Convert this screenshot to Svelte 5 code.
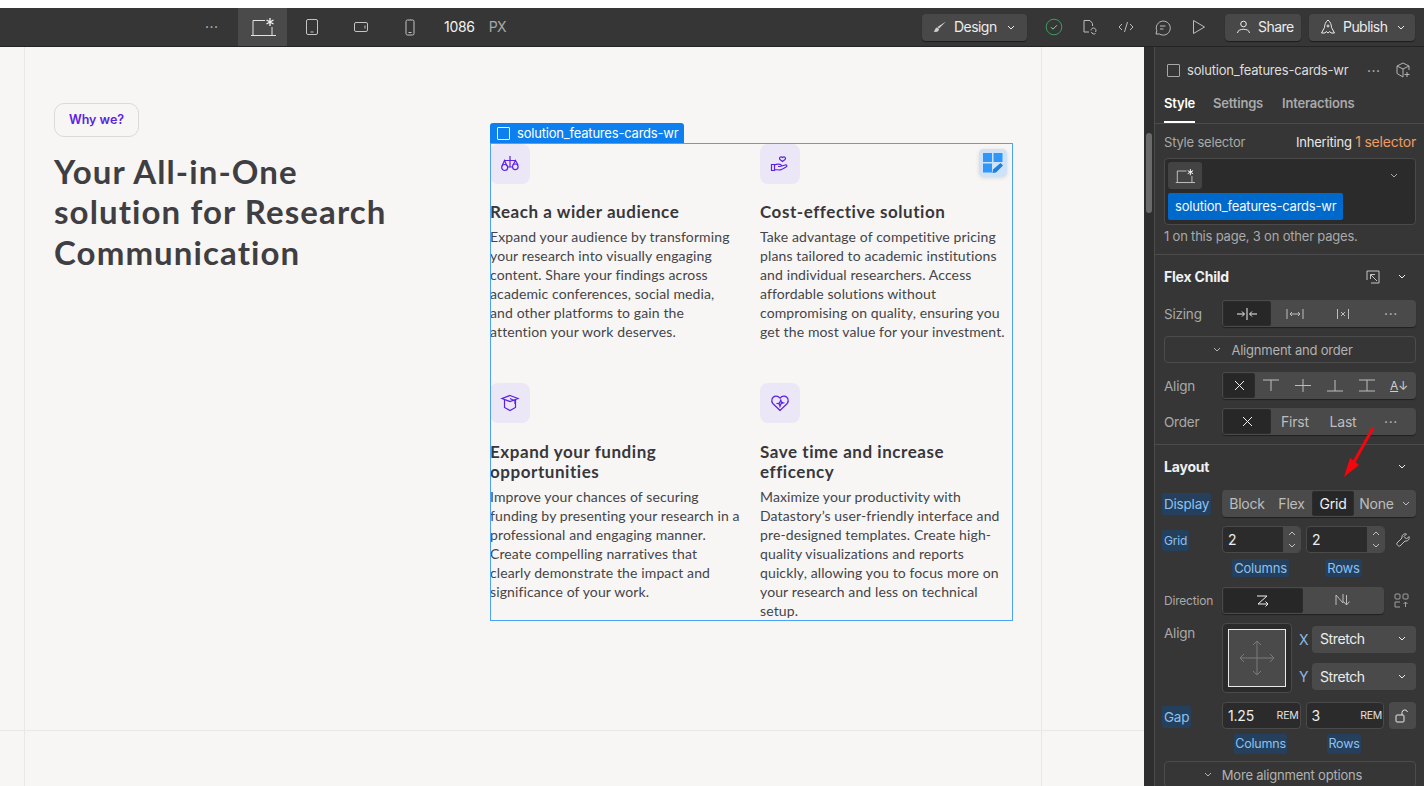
<script>
  const features = [
    {
      title: ['Reach a wider audience'],
      icon: 'scale',
      body: ['Expand your audience by transforming', 'your research into visually engaging', 'content. Share your findings across', 'academic conferences, social media,', 'and other platforms to gain the', 'attention your work deserves.']
    },
    {
      title: ['Cost-effective solution'],
      icon: 'hand',
      body: ['Take advantage of competitive pricing', 'plans tailored to academic institutions', 'and individual researchers. Access', 'affordable solutions without', 'compromising on quality, ensuring you', 'get the most value for your investment.']
    },
    {
      title: ['Expand your funding', 'opportunities'],
      icon: 'cap',
      body: ['Improve your chances of securing', 'funding by presenting your research in a', 'professional and engaging manner.', 'Create compelling narratives that', 'clearly demonstrate the impact and', 'significance of your work.']
    },
    {
      title: ['Save time and increase', 'efficency'],
      icon: 'heart',
      body: ['Maximize your productivity with', 'Datastory’s user-friendly interface and', 'pre-designed templates. Create high-', 'quality visualizations and reports', 'quickly, allowing you to focus more on', 'your research and less on technical', 'setup.']
    }
  ];
</script>

<div class="app">
  <header class="topbar">
    <span class="dots top-dots">···</span>
    <div class="tab active">
      <svg class="laptop" width="26" height="20" viewBox="0 0 26 20"><path d="M3 18V3.500h12M1 18.500h25M22 10v8" /><path class="star" d="M20 1v8M16.500 3l7 4M23.500 3l-7 4" /></svg>
    </div>
    <div class="tab"><svg width="14" height="18" viewBox="0 0 14 18"><rect x="1.500" y="1.500" width="11" height="15" rx="1.500" /><path d="M5.500 14h3" /></svg></div>
    <div class="tab"><svg width="16" height="12" viewBox="0 0 16 12"><rect x="1.500" y="1.500" width="13" height="9" rx="1.500" /><path d="M12 4.500v3" /></svg></div>
    <div class="tab"><svg width="10" height="17" viewBox="0 0 10 17"><rect x="1" y="1" width="8" height="15" rx="1.500" /><path d="M3.500 13.500h3" /></svg></div>
    <span class="width-val">1086</span>
    <span class="width-unit">PX</span>

    <div class="top-right">
      <button class="top-btn design">
        <svg width="14" height="14" viewBox="0 0 14 14"><path class="solid" d="M13 1.500L6 8.500l-1.500-1.500zM4 7.500c-2 0-1.500 3-3.500 4 2.500 1 5.500.5 5.500-2.500z" /></svg>
        <span>Design</span>
        <svg class="chev" width="8" height="5" viewBox="0 0 8 5"><path d="M1 1l3 3 3-3" /></svg>
      </button>
      <svg class="status" width="18" height="18" viewBox="0 0 18 18"><circle cx="9" cy="9" r="7.800" /><path d="M6 9.200l2 2 4-4" /></svg>
      <svg class="tool first-tool" width="16" height="16" viewBox="0 0 16 16"><path d="M7 13H2V1.500h6l2.500 3V7" /><path d="M9 11.500a2.500 2.500 0 1 1 4.500 1.500M13.500 14.500a2.500 2.500 0 0 1-4-1.500" /></svg>
      <svg class="tool code-tool" width="16" height="12" viewBox="0 0 16 12"><path d="M4 3L1 6l3 3M12 3l3 3-3 3M9.500 1l-3 10" /></svg>
      <svg class="tool chat-tool" width="17" height="17" viewBox="0 0 17 17"><path d="M2 15l.8-3.200A7 7 0 1 1 5.500 15z" /><path d="M6 7h5.500M6 10h3.500" /></svg>
      <svg class="tool play-tool" width="14" height="16" viewBox="0 0 14 16"><path d="M1.500 1.500v13l11-6.500z" /></svg>
      <button class="top-btn share">
        <svg width="15" height="14" viewBox="0 0 15 14"><circle cx="7.500" cy="4" r="2.800" /><path d="M1.500 13c0-5 12-5 12 0" /></svg>
        <span>Share</span>
      </button>
      <button class="top-btn publish">
        <svg width="16" height="16" viewBox="0 0 16 16"><path d="M8 1C5.500 3 4.500 6 4.500 8.500L1.500 14H5l1.200-1.500L8 14l1.800-1.500L11 14h3.500l-3-5.500C11.500 6 10.500 3 8 1z" /><circle cx="8" cy="7" r="1" /></svg>
        <span>Publish</span>
        <svg class="chev" width="8" height="5" viewBox="0 0 8 5"><path d="M1 1l3 3 3-3" /></svg>
      </button>
    </div>
  </header>

  <div class="workspace">
    <main class="canvas">
      <i class="guide v-left"></i>
      <i class="guide v-right"></i>
      <i class="guide h-bottom"></i>

      <section class="intro">
        <span class="badge">Why we?</span>
        <h1>Your All-in-One<br />solution for Research<br />Communication</h1>
      </section>

      <section class="cards">
        <div class="sel-label">
          <span class="sel-box"></span>
          solution_features-cards-wr
        </div>
        <div class="edit-grid">
          <svg width="20" height="20" viewBox="0 0 20 20">
            <rect x="0" y="0" width="9" height="9" /><rect x="10.500" y="0" width="9" height="9" /><rect x="0" y="10.500" width="9" height="9" />
            <path class="pencil" d="M17.500 10l2.500 2.500-7 7-3.500.5.500-3.500z" />
          </svg>
        </div>
        {#each features as f}
          <article class="card">
            <div class="card-icon">
              <svg width="20" height="20" viewBox="0 0 20 20">
                {#if f.icon === 'scale'}
                  <path d="M10 2v11M4 6.500h12M7 13h6" />
                  <path d="M2 12l2.500-5.500L7 12M13 11l2.500-4.500L18 11" />
                  <circle cx="4.700" cy="13.500" r="3" /><circle cx="15.300" cy="12.800" r="2.800" />
                {:else if f.icon === 'hand'}
                  <path d="M12.500 7.500L10 5.500c-1.500-1.500.5-3.500 2.500-2 2-1.500 4 .5 2.500 2z" />
                  <path d="M1.500 10.500h3v6h-3zM4.500 11c3-1.500 4-1 6-.5 1.500.5 1 2-.5 2H8M10 12.500l5-1.500c2-.5 2.500 1 1 2-3 2-5 3-7 3l-4.500-.5" />
                {:else if f.icon === 'cap'}
                  <path d="M10 2.500l8 3-8 3-8-3zM4.500 7v7.500L10 17.500l5.500-3V7" />
                  <path d="M10 5.500l5 2.500v3" />
                {:else}
                  <path d="M10 17.500L3 10.800C.5 8 2 3.500 5.800 3.200 7.800 3 9 4 10 5.200 11 4 12.200 3 14.200 3.200 18 3.500 19.500 8 17 10.800z" />
                  <path d="M10.800 7l-1.300 3-2 .5 2 .8.500 2 1.300-3 2-.5-2-.8z" />
                {/if}
              </svg>
            </div>
            <h3>{#each f.title as line}<span>{line}</span>{/each}</h3>
            <p>{#each f.body as line}<span>{line}</span>{/each}</p>
          </article>
        {/each}
      </section>
    </main>

    <div class="scroll-track"><div class="scroll-thumb"></div></div>

    <aside class="panel">
      <div class="el-head">
        <span class="el-box"></span>
        <span class="el-name">solution_features-cards-wr</span>
        <span class="dots el-dots">···</span>
        <svg class="cube" width="16" height="16" viewBox="0 0 16 16"><path d="M8 1l6 3v4M8 1L2 4v7.500L8 15M2 4l6 3 6-3M8 7v8" /><path d="M12 10v5M9.500 12.500h5" /></svg>
      </div>
      <nav class="tabs">
        <span class="on">Style</span><span>Settings</span><span>Interactions</span>
      </nav>

      <div class="section selector-sec">
        <div class="sel-title"><span>Style selector</span><span class="inherit">Inheriting <em>1 selector</em></span></div>
        <div class="sel-field">
          <div class="sel-top">
            <span class="chip"><svg class="laptop" width="20" height="16" viewBox="0 0 26 20"><path d="M3 18V3.500h12M1 18.500h25M22 10v8" /><path class="star" d="M20 1v8M16.500 3l7 4M23.500 3l-7 4" /></svg></span>
            <svg class="chev" width="8" height="5" viewBox="0 0 8 5"><path d="M1 1l3 3 3-3" /></svg>
          </div>
          <span class="tag">solution_features-cards-wr</span>
        </div>
        <div class="sel-note">1 on this page, 3 on other pages.</div>
      </div>

      <div class="section flex-sec">
        <div class="sec-head">
          <b>Flex Child</b>
          <svg class="corner" width="14" height="14" viewBox="0 0 14 14"><path d="M1 10V1h12v12H5" /><path d="M11 11L4.500 4.500M4.500 9V4.500H9" /></svg>
          <svg class="chev" width="8" height="5" viewBox="0 0 8 5"><path d="M1 1l3 3 3-3" /></svg>
        </div>
        <div class="row">
          <label>Sizing</label>
          <div class="seg four">
            <span class="on"><svg width="22" height="14" viewBox="0 0 22 14"><path d="M11 1v12M1 7h7M6 4.500L8.500 7 6 9.500M21 7h-7M16 4.500L13.500 7l2.500 2.500" /></svg></span>
            <span><svg width="18" height="12" viewBox="0 0 18 12"><path d="M1 1v10M17 1v10M4 6h10M6 4L4 6l2 2M12 4l2 2-2 2" /></svg></span>
            <span><svg width="14" height="12" viewBox="0 0 14 12"><path d="M1.500 1v10M12.500 1v10M5 4l4 4M9 4L5 8" /></svg></span>
            <span class="txt-dots">···</span>
          </div>
        </div>
        <div class="wide-btn"><svg class="chev" width="8" height="5" viewBox="0 0 8 5"><path d="M1 1l3 3 3-3" /></svg>Alignment and order</div>
        <div class="row">
          <label>Align</label>
          <div class="seg six">
            <span class="on"><svg width="11" height="11" viewBox="0 0 11 11"><path d="M1 1l9 9M10 1l-9 9" /></svg></span>
            <span><svg width="16" height="13" viewBox="0 0 16 13"><path d="M0 1h16M8 1v11" /></svg></span>
            <span><svg width="16" height="13" viewBox="0 0 16 13"><path d="M0 6.500h16M8 0v13" /></svg></span>
            <span><svg width="16" height="13" viewBox="0 0 16 13"><path d="M0 12h16M8 1v11" /></svg></span>
            <span><svg width="16" height="13" viewBox="0 0 16 13"><path d="M0 1h16M0 12h16M8 1v11" /></svg></span>
            <span class="az"><u>A</u>↓</span>
          </div>
        </div>
        <div class="row">
          <label>Order</label>
          <div class="seg four">
            <span class="on"><svg width="11" height="11" viewBox="0 0 11 11"><path d="M1 1l9 9M10 1l-9 9" /></svg></span>
            <span>First</span><span>Last</span><span class="txt-dots">···</span>
          </div>
        </div>
      </div>

      <div class="section layout-sec">
        <div class="sec-head">
          <b>Layout</b>
          <svg class="chev" width="8" height="5" viewBox="0 0 8 5"><path d="M1 1l3 3 3-3" /></svg>
        </div>
        <div class="row">
          <label><mark>Display</mark></label>
          <div class="seg display">
            <span>Block</span><span>Flex</span><span class="on">Grid</span>
            <span class="none">None <svg class="chev" width="8" height="5" viewBox="0 0 8 5"><path d="M1 1l3 3 3-3" /></svg></span>
          </div>
        </div>
        <div class="row">
          <label class="small low"><mark>Grid</mark></label>
          <div class="stepper">2<div class="arrows"><svg width="8" height="5" viewBox="0 0 8 5"><path d="M1 4l3-3 3 3" /></svg><svg width="8" height="5" viewBox="0 0 8 5"><path d="M1 1l3 3 3-3" /></svg></div></div>
          <div class="stepper">2<div class="arrows"><svg width="8" height="5" viewBox="0 0 8 5"><path d="M1 4l3-3 3 3" /></svg><svg width="8" height="5" viewBox="0 0 8 5"><path d="M1 1l3 3 3-3" /></svg></div></div>
          <svg class="wrench" width="14" height="14" viewBox="0 0 14 14"><path d="M13 3.500L10.500 6 8 3.500 10.500 1C8 .2 5.500 2 6 5L1 10c-1 1 1.500 4 3 3l5-5c3 .5 4.800-2 4-4.500z" /></svg>
        </div>
        <div class="captions"><mark>Columns</mark><mark>Rows</mark></div>
        <div class="row dir-row">
          <label class="small">Direction</label>
          <div class="seg direction">
            <span class="on"><svg width="14" height="15" viewBox="0 0 14 15"><path d="M1 1h10L2 9h10M9.500 6.500L12 9l-2.500 2.500" transform="translate(0 2)" /></svg></span>
            <span><svg width="16" height="15" viewBox="0 0 16 15"><path d="M1 12V2l7 8V1M8.500 8.500l3 3.500 3-3.500M11.500 2v10" /></svg></span>
          </div>
          <svg class="dir-extra" width="15" height="15" viewBox="0 0 15 15"><rect x="1" y="1" width="5" height="5" rx="1" /><rect x="9" y="1" width="5" height="5" rx="1" /><path d="M6 9H1v5h5M11.500 14V9M9.500 11l2-2 2 2" /></svg>
        </div>
        <div class="row align-row">
          <label>Align</label>
          <div class="align-box">
            <div class="align-inner">
              <svg width="36" height="36" viewBox="0 0 36 36"><path d="M18 1v34M1 18h34M14 5l4-4 4 4M14 31l4 4 4-4M5 14l-4 4 4 4M31 14l4 4-4 4" /></svg>
            </div>
          </div>
          <div class="xy">
            <div><span class="axis">X</span><div class="select">Stretch<svg class="chev" width="8" height="5" viewBox="0 0 8 5"><path d="M1 1l3 3 3-3" /></svg></div></div>
            <div><span class="axis">Y</span><div class="select">Stretch<svg class="chev" width="8" height="5" viewBox="0 0 8 5"><path d="M1 1l3 3 3-3" /></svg></div></div>
          </div>
        </div>
        <div class="row gap-row">
          <label class="low"><mark>Gap</mark></label>
          <div class="stepper unit"><span>1.25</span><small>REM</small></div>
          <div class="stepper unit"><span>3</span><small>REM</small></div>
          <div class="lock"><svg width="15" height="14" viewBox="0 0 15 14"><rect x="1" y="6" width="8" height="7" rx="1" /><path d="M7 6V3.500a2.800 2.800 0 0 1 5.500-.5" /></svg></div>
        </div>
        <div class="captions gap-cap"><mark>Columns</mark><mark>Rows</mark></div>
        <div class="wide-btn more"><svg class="chev" width="8" height="5" viewBox="0 0 8 5"><path d="M1 1l3 3 3-3" /></svg>More alignment options</div>
      </div>
    </aside>
  </div>

  <!-- red annotation drawn over the screenshot -->
  <svg class="red-arrow" width="40" height="60" viewBox="0 0 40 60"><path d="M33 4L14 38" /><path class="head" d="M4 53l6-19 9 7z" /></svg>
</div>

<style>
  :global(body) {
    margin: 0;
    background: #fff;
    overflow: hidden;
  }

  svg {
    fill: none;
    stroke: currentColor;
    stroke-width: 1;
    flex-shrink: 0;
  }

  .app {
    position: relative;
    height: 786px;
    padding-top: 8px;
    box-sizing: border-box;
    display: flex;
    flex-direction: column;
    overflow: hidden;
    font-family: Inter, "Liberation Sans", sans-serif;
    font-size: 13px;
    color: #d8d8d8;
  }

  /* top bar */
  .topbar {
    height: 39px;
    flex-shrink: 0;
    display: flex;
    align-items: stretch;
    background: #363636;
    border-bottom: 1px solid #242424;
    box-sizing: border-box;
    padding-left: 205px;
  }

  .dots {
    letter-spacing: 0.5px;
    color: #bdbdbd;
    font-size: 14px;
  }

  .top-dots {
    width: 33px;
    line-height: 37px;
  }

  .tab {
    width: 49px;
    display: flex;
    align-items: center;
    justify-content: center;
    color: #c4c4c4;
  }

  .tab.active {
    background: #4a4a4a;
    color: #e4e4e4;
  }

  .laptop .star {
    stroke-width: 1.300;
    color: #f4f4f4;
  }

  .width-val {
    margin-left: 10px;
    line-height: 37px;
    font-size: 14px;
    letter-spacing: -0.3px;
    color: #f2f2f2;
  }

  .width-unit {
    margin-left: 14px;
    line-height: 37px;
    font-size: 14px;
    letter-spacing: -0.6px;
    color: #a8a8a8;
  }

  .top-right {
    margin-left: auto;
    display: flex;
    align-items: center;
    padding-right: 9px;
  }

  .top-btn {
    height: 27px;
    display: flex;
    align-items: center;
    gap: 7px;
    background: #484848;
    border: 0;
    border-radius: 4px;
    box-shadow: 0 1px 1px rgba(0, 0, 0, 0.5);
    color: #ececec;
    font: inherit;
    font-size: 14px;
    letter-spacing: -0.55px;
    padding: 0 0 0 11px;
    box-sizing: border-box;
  }

  .top-btn span {
    margin-top: -2px;
  }

  .top-btn .chev {
    margin-left: 3px;
  }

  .design {
    width: 105px;
  }

  .solid {
    fill: #cfcfcf;
    stroke: none;
  }

  .share {
    width: 76px;
    margin-left: 19px;
  }

  .publish {
    width: 106px;
    margin-left: 8px;
  }

  .status {
    margin-left: 18px;
    color: #3f9a62;
  }

  .status path {
    color: #6fe39a;
  }

  .tool {
    color: #bcbcbc;
  }

  .first-tool {
    margin-left: 19px;
  }

  .code-tool {
    margin-left: 20px;
  }

  .chat-tool {
    margin-left: 20px;
  }

  .play-tool {
    margin-left: 21px;
  }

  /* canvas */
  .workspace {
    flex: 1;
    min-height: 0;
    display: flex;
  }

  .canvas {
    position: relative;
    width: 1144px;
    flex-shrink: 0;
    display: flex;
    background: #f7f6f4;
    font-family: Lato, "Liberation Sans", sans-serif;
    color: #333237;
    overflow: hidden;
  }

  .guide {
    position: absolute;
    background: #e9e8e6;
  }

  .v-left {
    left: 24px;
    top: 0;
    bottom: 0;
    width: 1px;
  }

  .v-right {
    left: 1041px;
    top: 0;
    bottom: 0;
    width: 1px;
  }

  .h-bottom {
    left: 0;
    right: 0;
    top: 683px;
    height: 1px;
  }

  .intro {
    width: 490px;
    flex-shrink: 0;
    box-sizing: border-box;
    padding: 56px 0 0 54px;
  }

  .badge {
    display: inline-block;
    box-sizing: border-box;
    width: 85px;
    height: 34px;
    line-height: 31px;
    text-align: center;
    border: 1px solid #dcdad8;
    border-radius: 10px;
    font-family: Inter, sans-serif;
    font-size: 12.500px;
    font-weight: 600;
    color: #5b21e6;
  }

  h1 {
    margin: 13.700px 0 0;
    font-size: 33px;
    line-height: 40.500px;
    font-weight: 700;
    letter-spacing: 1.100px;
    color: #3f3e42;
  }

  .cards {
    position: relative;
    width: 523px;
    height: 478px;
    margin-top: 96px;
    padding-top: 1px;
    box-sizing: border-box;
    outline: 1px solid #4aa3f5;
    outline-offset: -1px;
    display: grid;
    grid-template-columns: 250px 250px;
    grid-template-rows: 191.400px auto;
    column-gap: 20px;
    row-gap: 48px;
  }

  .sel-label {
    position: absolute;
    left: 0;
    top: -20px;
    height: 20px;
    width: 194px;
    display: flex;
    align-items: center;
    gap: 7px;
    box-sizing: border-box;
    padding-left: 7px;
    background: #0d7fee;
    border-radius: 3px 3px 0 0;
    color: #fff;
    font-family: Inter, sans-serif;
    font-size: 13px;
    letter-spacing: -0.2px;
  }

  .sel-box {
    width: 13px;
    height: 13px;
    box-sizing: border-box;
    border: 1px solid #fff;
    border-radius: 1px;
  }

  .edit-grid {
    position: absolute;
    right: 6px;
    top: 6px;
    width: 28px;
    height: 28px;
    display: flex;
    align-items: center;
    justify-content: center;
    background: #cfe3f8;
    border-radius: 5px;
    box-shadow: 0 1px 4px rgba(0, 0, 0, 0.12);
  }

  .edit-grid svg {
    fill: #2f97f7;
    stroke: none;
  }

  .edit-grid .pencil {
    fill: #1c80dc;
  }

  .card {
    min-width: 0;
  }

  .card-icon {
    width: 40px;
    height: 40px;
    display: flex;
    align-items: center;
    justify-content: center;
    background: #ece7f6;
    border-radius: 8px;
    color: #5b21e6;
  }

  .card-icon svg {
    stroke-width: 1.200;
  }

  h3 {
    margin: 18.300px 0 0;
    font-size: 17px;
    line-height: 20px;
    font-weight: 700;
    letter-spacing: 0.55px;
    color: #38373b;
  }

  h3 span,
  .card p span {
    display: block;
    white-space: nowrap;
  }

  .card p {
    margin: 5px 0 0;
    font-size: 14px;
    line-height: 19px;
    letter-spacing: 0.12px;
    color: #454449;
  }

  .red-arrow {
    position: absolute;
    left: 1340px;
    top: 424px;
    color: #f5060f;
    stroke-width: 3;
  }

  .red-arrow .head {
    fill: #f5060f;
    stroke: none;
  }

  /* panel */
  .scroll-track {
    position: relative;
    width: 10px;
    background: #2e2e2e;
    flex-shrink: 0;
  }

  .scroll-thumb {
    position: absolute;
    left: 2px;
    top: 86px;
    width: 6px;
    height: 80px;
    border-radius: 3px;
    background: #6a6a6a;
  }

  .panel {
    position: relative;
    flex: 1;
    min-width: 0;
    background: #363636;
    border-left: 1px solid #4c4c4c;
    overflow: hidden;
    letter-spacing: -0.2px;
    color: #a9a9a9;
  }

  .el-head {
    height: 46px;
    display: flex;
    align-items: center;
    padding: 0 12px 0 12px;
    box-sizing: border-box;
    color: #dedede;
  }

  .el-box {
    width: 11px;
    height: 11px;
    border: 1px solid #a8a8a8;
    border-radius: 1px;
    margin-right: 7px;
  }

  .el-name {
    width: 180px;
    white-space: nowrap;
  }

  .el-dots {
    width: 28px;
  }

  .cube {
    color: #b5b5b5;
  }

  .tabs {
    height: 30px;
    display: flex;
    gap: 19px;
    padding-left: 9px;
    border-bottom: 1px solid #4c4c4c;
    font-weight: 600;
    line-height: 20px;
    color: #a9a9a9;
  }

  .tabs span {
    box-sizing: border-box;
    height: 30px;
  }

  .tabs .on {
    margin-right: -1px;
    color: #fff;
    border-bottom: 2px solid #fff;
  }

  .section {
    padding: 0 8px 0 9px;
    border-bottom: 1px solid #4c4c4c;
  }

  .selector-sec {
    height: 131px;
    box-sizing: border-box;
  }

  .sel-title {
    display: flex;
    justify-content: space-between;
    height: 34px;
    line-height: 36px;
  }

  .inherit {
    color: #e8e8e8;
  }

  .inherit em {
    font-style: normal;
    font-size: 14px;
    color: #ee9c62;
  }

  .sel-field {
    height: 67px;
    box-sizing: border-box;
    padding: 3px;
    background: #2b2b2b;
    border: 1px solid #4a4a4a;
    border-radius: 4px;
  }

  .sel-top {
    height: 31px;
    display: flex;
    justify-content: space-between;
    align-items: flex-start;
    padding-right: 14px;
  }

  .sel-top .chev {
    margin-top: 11px;
  }

  .chip {
    width: 34px;
    height: 27px;
    display: flex;
    align-items: center;
    justify-content: center;
    background: #434343;
    border-radius: 3px;
    color: #e4e4e4;
  }

  .tag {
    display: inline-block;
    height: 27px;
    line-height: 27px;
    padding: 0 7px;
    background: #006acc;
    border-radius: 2px;
    color: #f4f8fc;
  }

  .sel-note {
    margin-top: 3px;
  }

  .sec-head {
    height: 45px;
    box-sizing: border-box;
    padding-bottom: 2px;
    display: flex;
    align-items: center;
    color: #f0f0f0;
  }

  .sec-head b {
    font-size: 14px;
    font-weight: 700;
    flex: 1;
  }

  .sec-head .chev {
    margin-right: 10px;
  }

  .corner {
    margin-right: 18px;
    color: #c4c4c4;
  }

  .flex-sec {
    height: 190px;
    box-sizing: border-box;
  }

  .row {
    display: flex;
    align-items: center;
    height: 27px;
    margin-bottom: 9px;
  }

  .row label {
    width: 58px;
    flex-shrink: 0;
    font-size: 13.500px;
  }

  .row label.small {
    font-size: 12px;
  }

  .row label.low {
    padding-top: 2px;
  }

  .row label mark {
    margin-left: -2px;
    padding: 3px 2px;
  }

  .seg {
    flex: 1;
    height: 27px;
    display: flex;
    align-items: stretch;
    box-sizing: border-box;
    padding: 1px;
    background: #4a4a4a;
    border-radius: 4px;
    box-shadow: 0 1px 1px rgba(0, 0, 0, 0.4);
    color: #bdbdbd;
    font-size: 14px;
  }

  .seg span {
    flex: 1;
    display: flex;
    align-items: center;
    justify-content: center;
    border-radius: 3px;
    white-space: nowrap;
  }

  .seg .on {
    background: #272727;
    color: #f0f0f0;
    box-shadow: inset 0 0 0 1px #2c2c2c;
  }

  .wide-btn {
    height: 27px;
    margin-bottom: 9px;
    box-sizing: border-box;
    display: flex;
    align-items: center;
    justify-content: center;
    gap: 10px;
    padding-right: 14px;
    border: 1px solid #4c4c4c;
    border-radius: 4px;
    color: #b2b2b2;
  }

  .az {
    font-size: 12px;
    color: #cfcfcf;
  }

  .txt-dots {
    letter-spacing: 0.6px;
  }

  .layout-sec {
    border-bottom: 0;
  }

  .display span {
    flex: 0 0 auto;
  }

  .display span:nth-child(1) {
    width: 48px;
  }

  .display span:nth-child(2) {
    width: 41px;
  }

  .display span:nth-child(3) {
    width: 42px;
  }

  .display .none {
    flex: 1;
    gap: 8px;
  }

  mark {
    background: #24405c;
    color: #8fc0f0;
    border-radius: 2px;
  }

  .stepper {
    width: 79px;
    height: 27px;
    margin-right: 5px;
    box-sizing: border-box;
    display: flex;
    align-items: center;
    justify-content: space-between;
    padding-left: 5px;
    background: #2b2b2b;
    border: 1px solid #4a4a4a;
    border-radius: 4px;
    font-size: 14px;
    color: #ededed;
    overflow: hidden;
  }

  .arrows {
    width: 17px;
    height: 100%;
    display: flex;
    flex-direction: column;
    align-items: center;
    justify-content: space-around;
    background: #4a4a4a;
    color: #c0c0c0;
  }

  .wrench {
    margin-left: 6px;
    color: #c0c0c0;
  }

  .captions {
    display: flex;
    height: 25px;
    margin-top: -3px;
    padding-left: 68px;
    margin-bottom: 3px;
    font-size: 13px;
  }

  .captions mark {
    height: 18px;
    line-height: 18px;
    text-align: center;
  }

  .captions mark:first-child {
    width: 57px;
    margin-right: 36px;
  }

  .captions mark:last-child {
    width: 37px;
  }

  .direction {
    flex: 0 0 162px;
  }

  .dir-extra {
    margin-left: 10px;
    color: #a0a0a0;
  }

  .align-row {
    height: 70px;
    align-items: flex-start;
  }

  .align-row label {
    line-height: 20px;
  }

  .align-box {
    width: 70px;
    height: 70px;
    box-sizing: border-box;
    padding: 5px;
    background: #2b2b2b;
    border: 1px solid #4a4a4a;
    border-radius: 4px;
  }

  .align-inner {
    height: 100%;
    box-sizing: border-box;
    display: flex;
    align-items: center;
    justify-content: center;
    background: #4a4a4a;
    border: 1px solid #e8e8e8;
    color: #7a7a7a;
  }

  .xy {
    flex: 1;
    margin-left: 7px;
    display: flex;
    flex-direction: column;
    gap: 10px;
    padding-top: 3px;
  }

  .xy > div {
    display: flex;
    align-items: center;
    gap: 5px;
  }

  .axis {
    width: 8px;
    font-size: 14px;
    color: #8fb8e0;
  }

  .select {
    flex: 1;
    height: 27px;
    display: flex;
    align-items: center;
    justify-content: space-between;
    box-sizing: border-box;
    padding: 0 10px 0 8px;
    background: #4a4a4a;
    border-radius: 4px;
    font-size: 14px;
    letter-spacing: -0.4px;
    color: #ededed;
  }

  .xy > div:first-child .select {
    padding-bottom: 2px;
  }

  .gap-row {
    margin-bottom: 5px;
  }

  .unit small {
    font-size: 10.500px;
    letter-spacing: -0.2px;
    color: #e0e0e0;
    padding-right: 1px;
  }

  .lock {
    width: 27px;
    height: 27px;
    display: flex;
    align-items: center;
    justify-content: center;
    background: #4a4a4a;
    border-radius: 4px;
    color: #e8e8e8;
  }

  .gap-cap {
    height: 27px;
    margin: 0;
    font-size: 12.500px;
    padding-left: 70px;
  }

  .gap-cap mark {
    height: 20px;
    line-height: 20px;
  }

  .gap-cap mark:first-child {
    width: 53px;
    margin-right: 40px;
  }

  .gap-cap mark:last-child {
    width: 34px;
  }

  .more {
    margin-bottom: 0;
  }
</style>
